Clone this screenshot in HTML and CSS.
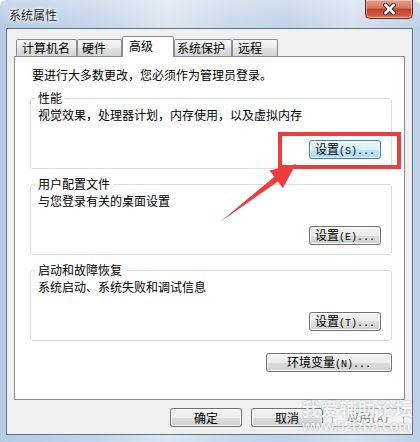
FILE: index.html
```html
<!DOCTYPE html>
<html lang="zh-CN">
<head>
	<meta charset="UTF-8">
	<title>系统属性</title>
	<link rel="stylesheet" href="styles.css">
</head>
<body>
	<div class="window">
		<!-- 标题栏 -->
		<div class="titlebar">
			<span class="title">系统属性</span>
			<span class="close">
				<svg width="13" height="12" viewBox="0 0 13 12">
					<path d="M2.5 2 L10.5 10 M10.5 2 L2.5 10" stroke="#3a2a28" stroke-width="4.6" stroke-linecap="square"/>
					<path d="M2.5 2 L10.5 10 M10.5 2 L2.5 10" stroke="#ffffff" stroke-width="2.6" stroke-linecap="square"/>
				</svg>
			</span>
		</div>

		<div class="client">
			<!-- 选项卡 -->
			<ul class="tabs">
				<li class="tab t1">计算机名</li>
				<li class="tab t2">硬件</li>
				<li class="tab t3 active">高级</li>
				<li class="tab t4">系统保护</li>
				<li class="tab t5">远程</li>
			</ul>

			<div class="panel">
				<p class="intro">要进行大多数更改，您必须作为管理员登录。</p>

				<fieldset class="group">
					<legend>性能</legend>
					<p>视觉效果，处理器计划，内存使用，以及虚拟内存</p>
					<button class="btn default">设置<span class="key">(S)...</span></button>
				</fieldset>

				<fieldset class="group">
					<legend>用户配置文件</legend>
					<p>与您登录有关的桌面设置</p>
					<button class="btn">设置<span class="key">(E)...</span></button>
				</fieldset>

				<fieldset class="group">
					<legend>启动和故障恢复</legend>
					<p>系统启动、系统失败和调试信息</p>
					<button class="btn">设置<span class="key">(T)...</span></button>
				</fieldset>

				<button class="btn env">环境变量<span class="key">(N)...</span></button>
			</div>

			<!-- 底部按钮 -->
			<div class="footer">
				<button class="btn">确定</button>
				<button class="btn">取消</button>
				<button class="btn disabled">应用<span class="key">(A)</span></button>
			</div>
		</div>

		<!-- 水印 -->
		<div class="mark">
			<p class="mark-cn">我爱辅助论坛</p>
			<p class="mark-url">www.52fzba.com</p>
		</div>

		<!-- 标注：红框和箭头 -->
		<svg class="annot" width="420" height="442" viewBox="0 0 420 442">
			<rect x="280" y="134" width="119" height="33" fill="none" stroke="#ef3b3b" stroke-width="4"/>
			<polygon points="220,222 274.3,176.8 269.4,170.5 296,164 282.8,187.9 277.9,181.6" fill="#ef3b3b"/>
		</svg>
	</div>
</body>
</html>
```

FILE: styles.css
```css
*{
	margin: 0;
	padding: 0;
	box-sizing: border-box;
}
body{
	background: #ffffff;
	font: 12px/16px "Noto Sans CJK SC", "Microsoft YaHei", sans-serif;
	color: #000000;
}
ul{
	list-style: none;
}
.window{
	position: relative;
	width: 420px;
	height: 442px;
	overflow: hidden;
	border-radius: 6px 6px 0 0;
	background:
		linear-gradient(180deg, rgba(255,255,255,0.3), rgba(255,255,255,0) 28px),
		linear-gradient(90deg, #b3cbe4 0%, #c2d4e8 22%, #dae5f0 40%, #c8d8ea 55%, #bfd2e7 68%, #d4e0ed 84%, #bcd1e8 100%);
}
/* 标题栏 */
.titlebar{
	display: flex;
	align-items: flex-start;
	height: 28px;
	padding-left: 9px;
}
.title{
	margin-top: 7px;
	color: #1a1a1a;
	text-shadow: 0 0 5px #ffffff, 0 0 3px #ffffff, 0 0 2px #ffffff;
}
.close{
	display: flex;
	align-items: center;
	justify-content: center;
	margin-left: auto;
	margin-right: 7px;
	width: 48px;
	height: 19px;
	border: 1px solid #5b2a22;
	border-top: none;
	border-radius: 0 0 5px 5px;
	background: linear-gradient(#e0a393 0%, #d47661 45%, #c1422c 50%, #cf5a3f 85%, #e08a6b 100%);
	box-shadow: inset 0 0 0 1px rgba(255,220,210,0.5);
}
/* 客户区 */
.client{
	margin: 0 7px 0 6px;
	height: 407px;
	border: 1px solid #5f7489;
	background: #f0f0f0;
}
.tabs{
	display: flex;
	align-items: flex-end;
	height: 27px;
	padding-left: 9px;
}
.tab{
	height: 17px;
	border: 1px solid #898c95;
	border-bottom: none;
	border-radius: 2px 2px 0 0;
	background: linear-gradient(#f7f7f7, #ececec 50%, #e0e0e0 50%, #d4d4d4);
	padding-left: 5px;
	white-space: nowrap;
}
.t1{ width: 61px; }
.t2{ width: 45px; padding-left: 4px; }
.t3{ width: 52px; padding-left: 6px; }
.t4{ width: 58px; padding-left: 2px; }
.t5{ width: 46px; }
.tab.active{
	position: relative;
	height: 21px;
	margin-bottom: -1px;
	padding-top: 1px;
	background: #ffffff;
}
.panel{
	height: 344px;
	margin: 0 7px;
	border: 1px solid #898c95;
	background: #ffffff;
	padding: 10px 12px 0 15px;
}
.intro{
	margin-left: 2px;
}
.group{
	margin-top: 8px;
	border: 1px solid #d5dfe5;
	border-radius: 3px;
	padding: 2px 10px 9px 7px;
}
.group legend{
	line-height: 14px;
	padding: 0 3px;
	margin-left: -3px;
}
.group .btn{
	display: block;
	margin: 17px 0 0 auto;
}
/* 按钮 */
.btn{
	width: 72px;
	height: 19px;
	border: 1px solid #707070;
	border-radius: 3px;
	background: linear-gradient(#f2f2f2 0%, #ebebeb 50%, #dddddd 50%, #cfcfcf 100%);
	box-shadow: inset 0 0 0 1px #fbfbfb;
	font: 12px/15px "Noto Sans CJK SC", sans-serif;
	color: #000000;
}
.btn .key{
	font: 10px/15px "Liberation Mono", monospace;
}
.btn.default{
	border-color: #3c7fb1;
	background: linear-gradient(#eaf6fd 0%, #d9f0fc 50%, #bee6fd 50%, #a7d9f5 100%);
	box-shadow: inset 0 0 0 1px #f4fbfe;
}
.btn.disabled{
	border-color: #adb2b5;
	background: #f4f4f4;
	box-shadow: none;
	color: #838383;
}
.env{
	display: block;
	width: 126px;
	margin: 12px 0 0 auto;
}
.footer{
	display: flex;
	justify-content: flex-end;
	gap: 9px;
	padding: 8px 8px 0 0;
}
/* 水印 */
.mark{
	position: absolute;
	left: 302px;
	top: 398px;
	color: rgba(255,255,255,0.9);
	text-shadow: 0 0 1px rgba(110,125,140,0.55), 0 0 2px rgba(110,125,140,0.3);
	pointer-events: none;
}
.mark-cn{
	font: bold 18px/21px "Noto Sans CJK SC", sans-serif;
	letter-spacing: 0.5px;
}
.mark-url{
	font: bold 14px/14px "Liberation Sans", sans-serif;
	letter-spacing: -0.3px;
}
.annot{
	position: absolute;
	left: 0;
	top: 0;
	pointer-events: none;
}
```
